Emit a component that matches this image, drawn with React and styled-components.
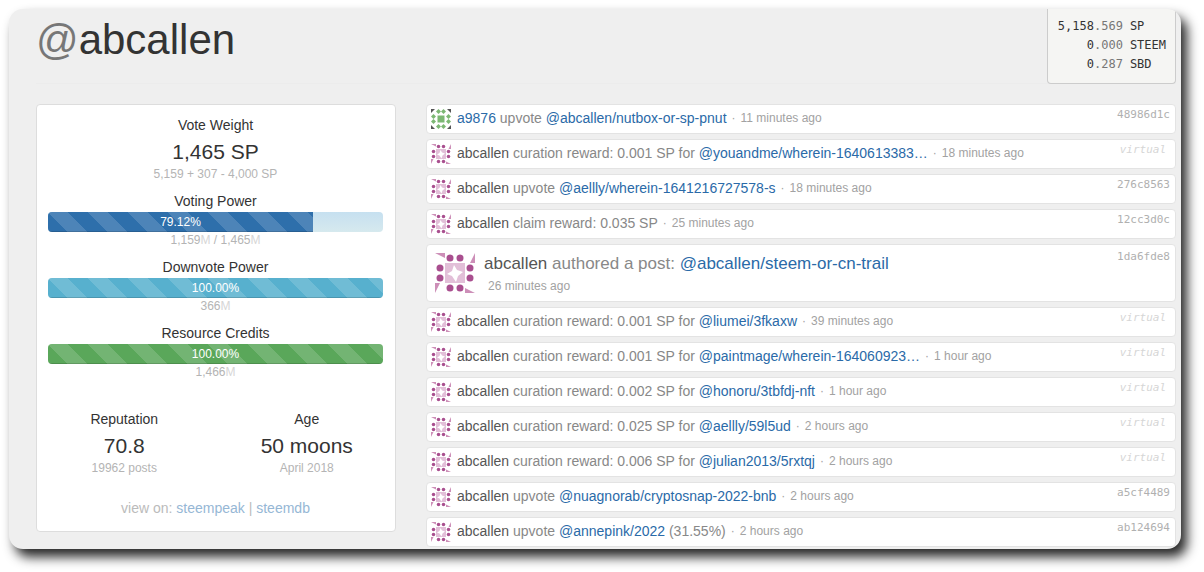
import React from 'react';
import styled, { createGlobalStyle } from 'styled-components';

const METERS = [
  { id: 'voting', label: 'Voting Power', percent: 79.12, color: '#2e6fab', amounts: ['1,159', '1,465'] },
  { id: 'downvote', label: 'Downvote Power', percent: 100, color: '#57b0ce', amounts: ['366'] },
  { id: 'credits', label: 'Resource Credits', percent: 100, color: '#5aa75a', amounts: ['1,466'] },
];

const BALANCES = [
  { unit: 'SP', whole: '5,158', fraction: '.569' },
  { unit: 'STEEM', whole: '0', fraction: '.000' },
  { unit: 'SBD', whole: '0', fraction: '.287' },
];

const ACTIVITY = [
  { user: 'a9876', action: 'upvote', target: '@abcallen/nutbox-or-sp-pnut', time: '11 minutes ago', trx: '48986d1c', other: true },
  { action: 'curation reward: 0.001 SP for', target: '@youandme/wherein-1640613383…', time: '18 minutes ago' },
  { action: 'upvote', target: '@aellly/wherein-1641216727578-s', time: '18 minutes ago', trx: '276c8563' },
  { action: 'claim reward: 0.035 SP', time: '25 minutes ago', trx: '12cc3d0c' },
  { action: 'authored a post:', target: '@abcallen/steem-or-cn-trail', time: '26 minutes ago', trx: '1da6fde8', large: true },
  { action: 'curation reward: 0.001 SP for', target: '@liumei/3fkaxw', time: '39 minutes ago' },
  { action: 'curation reward: 0.001 SP for', target: '@paintmage/wherein-164060923…', time: '1 hour ago' },
  { action: 'curation reward: 0.002 SP for', target: '@honoru/3tbfdj-nft', time: '1 hour ago' },
  { action: 'curation reward: 0.025 SP for', target: '@aellly/59l5ud', time: '2 hours ago' },
  { action: 'curation reward: 0.006 SP for', target: '@julian2013/5rxtqj', time: '2 hours ago' },
  { action: 'upvote', target: '@nuagnorab/cryptosnap-2022-bnb', time: '2 hours ago', trx: 'a5cf4489' },
  { action: 'upvote', target: '@annepink/2022', note: '(31.55%)', time: '2 hours ago', trx: 'ab124694' },
];

const PinkAvatar = () => (
  <>
    <path d='M0 0h10v5zM40 0v10h-5zM40 40H30v-5zM0 40V30h5z' fill='#cd8fb8' />
    <path d='M10 10h20v20H10z' fill='#e2bfd8' />
    <path d='M19 12l3 5 6 2-5 4-2 6-4-6-5-2 5-3z' fill='#fff' />
    {[15, 25].map(n => (
      <g key={n} fill='#a94f8f'>
        <circle cx={n} cy='5' r='3.5' />
        <circle cx={n} cy='35' r='3.5' />
        <circle cx='5' cy={n} r='3.5' />
        <circle cx='35' cy={n} r='3.5' />
      </g>
    ))}
  </>
);

const GreenAvatar = () => (
  <>
    <path d='M0 0h8l-8 8zM40 0v8l-8-8zM40 40h-8l8-8zM0 40v-8l8 8z' fill='#555' />
    <path d='M13 13h14v14H13z' fill='#7db874' />
    {[15, 25].map(n => (
      <g key={n} fill='#7db874'>
        <path d={`M${n} 0l5 5-5 5-5-5z`} />
        <path d={`M${n} 30l5 5-5 5-5-5z`} />
        <path d={`M5 ${n - 5}l5 5-5 5-5-5z`} />
        <path d={`M35 ${n - 5}l5 5-5 5-5-5z`} />
      </g>
    ))}
  </>
);

const Meter = ({ meter }) => (
  <>
    <Label>{meter.label}</Label>
    <Track role='progressbar' aria-label={meter.label} aria-valuenow={meter.percent}>
      <Fill $color={meter.color} style={{ width: `${meter.percent}%` }}>
        {meter.percent.toFixed(2)}%
      </Fill>
    </Track>
    <MeterNote>
      {meter.amounts.map((amount, i) => (
        <React.Fragment key={amount}>
          {i > 0 && ' / '}
          {amount}
          <Unit>M</Unit>
        </React.Fragment>
      ))}
    </MeterNote>
  </>
);

const Activity = ({ item }) => (
  <Row $large={item.large}>
    <Avatar viewBox='0 0 40 40' $large={item.large} aria-hidden='true'>
      {item.other ? <GreenAvatar /> : <PinkAvatar />}
    </Avatar>
    <Summary $large={item.large}>
      <span>
        <UserLink href='#user' $other={item.other}>{item.user || 'abcallen'}</UserLink> {item.action}
        {item.target && <> <PostLink href='#post'>{item.target}</PostLink></>}
        {item.note && ` ${item.note}`}
      </span>
      <Time $large={item.large}>
        {!item.large && <Dot>·</Dot>}
        {item.time}
      </Time>
    </Summary>
    {item.trx ? <TrxLink href='#trx' $large={item.large}>{item.trx}</TrxLink> : <Virtual>virtual</Virtual>}
  </Row>
);

const App = () => (
  <>
    <PageStyle />
    <Frame>
      <Header>
        <Title><At>@</At>abcallen</Title>
        <Balances>
          <tbody>
            {BALANCES.map(({ unit, whole, fraction }) => (
              <tr key={unit}>
                <Amount>{whole}<Fraction>{fraction}</Fraction></Amount>
                <td>{unit}</td>
              </tr>
            ))}
          </tbody>
        </Balances>
      </Header>
      <Columns>
        <Card>
          <Label>Vote Weight</Label>
          <Value>1,465 SP</Value>
          <Note>5,159 + 307 - 4,000 SP</Note>
          {METERS.map(meter => (
            <Meter key={meter.id} meter={meter} />
          ))}
          <Stats>
            <div>
              <Label>Reputation</Label>
              <Value>70.8</Value>
              <Note>19962 posts</Note>
            </div>
            <div>
              <Label>Age</Label>
              <Value>50 moons</Value>
              <Note>April 2018</Note>
            </div>
          </Stats>
          <ViewOn>
            view on: <a href='#steempeak'>steempeak</a> | <a href='#steemdb'>steemdb</a>
          </ViewOn>
        </Card>
        <Feed>
          {ACTIVITY.map((item, i) => (
            <Activity key={i} item={item} />
          ))}
        </Feed>
      </Columns>
    </Frame>
  </>
);

export default App;

const PageStyle = createGlobalStyle`
  * {
    box-sizing: border-box;
  }

  body {
    margin: 0;
    background: #fff;
    color: #333;
    font: 14px/20px 'Liberation Sans', Arial, sans-serif;
  }

  a {
    text-decoration: none;
  }
`;

const Frame = styled.main`
  height: calc(100vh - 32px);
  margin: 9px 23px 23px 9px;
  padding: 0 5px 0 27px;
  overflow: hidden;
  background: #efefef;
  border-radius: 14px;
  box-shadow: 6px 8px 12px rgba(0, 0, 0, 0.85);
`;

const Header = styled.header`
  display: flex;
  align-items: flex-start;
  justify-content: space-between;
  height: 75px;
  margin-bottom: 20px;
  border-bottom: 1px solid #ececec;
`;

const Title = styled.h1`
  margin: 8px 0 0;
  font-size: 42px;
  font-weight: 400;
  line-height: 46px;
`;

const At = styled.span`
  color: #777;
`;

const Balances = styled.table`
  border: 1px solid #ccc;
  border-top: 0;
  border-radius: 0 0 4px 4px;
  background: #f5f5f3;
  border-spacing: 0;
  padding: 8px 9px 9px 10px;
  font: 12px/19px 'DejaVu Sans Mono', monospace;

  td {
    padding: 0;
  }
`;

const Amount = styled.td`
  && {
    padding-right: 7px;
  }
  text-align: right;
`;

const Fraction = styled.span`
  color: #777;
`;

const Columns = styled.div`
  display: grid;
  grid-template-columns: 360fr 750fr;
  gap: 30px;
  align-items: start;
`;

const Card = styled.section`
  padding: 10px 12px 13px 11px;
  border: 1px solid #ddd;
  border-radius: 4px;
  background: #fff;
  text-align: center;
`;

const Label = styled.div`
  line-height: 20px;
`;

const Value = styled.div`
  height: 32px;
  font-size: 21px;
  line-height: 34px;
`;

const Note = styled.div`
  height: 24px;
  color: #b4b4b4;
  font-size: 12px;
  line-height: 14px;
`;

const MeterNote = styled(Note)`
  height: 25px;
  line-height: 16px;
`;

const Unit = styled.span`
  color: #d6d6d6;
`;

const Track = styled.div`
  height: 20px;
  margin-top: 1px;
  overflow: hidden;
  border-radius: 4px;
  background: linear-gradient(#c6e0f0, #d6e9ee);
`;

const Fill = styled.div`
  height: 100%;
  background: linear-gradient(
      45deg,
      rgba(255, 255, 255, 0.15) 25%,
      transparent 25%,
      transparent 50%,
      rgba(255, 255, 255, 0.15) 50%,
      rgba(255, 255, 255, 0.15) 75%,
      transparent 75%
    )
    0 0 / 40px 40px ${({ $color }) => $color};
  box-shadow: inset 0 -1px 0 rgba(0, 0, 0, 0.15);
  color: #fff;
  font-size: 12px;
  line-height: 20px;
`;

const Stats = styled.div`
  display: grid;
  grid-template-columns: 1fr 1fr;
  gap: 30px;
  margin: 20px 0 13px;
`;

const ViewOn = styled.div`
  color: #bbb;

  a {
    color: #96b7d5;
  }
`;

const Feed = styled.section`
  display: grid;
  gap: 5px;
`;

const Row = styled.article`
  display: flex;
  align-items: flex-start;
  height: ${({ $large }) => ($large ? 58 : 30)}px;
  padding: ${({ $large }) => ($large ? '8px 5px 0 8px' : '4px 5px 0 4px')};
  border: 1px solid #e3e3e3;
  border-radius: 4px;
  background: #fff;
`;

const Avatar = styled.svg`
  flex: none;
  width: ${({ $large }) => ($large ? 40 : 20)}px;
  height: ${({ $large }) => ($large ? 40 : 20)}px;
  margin-right: ${({ $large }) => ($large ? 9 : 6)}px;
`;

const Summary = styled.div`
  display: flex;
  flex: 1;
  flex-direction: ${({ $large }) => ($large ? 'column' : 'row')};
  color: #888;
  font-size: ${({ $large }) => ($large ? 17 : 14)}px;
  line-height: ${({ $large }) => ($large ? 22 : 18)}px;
  white-space: nowrap;
`;

const UserLink = styled.a`
  color: ${({ $other }) => ($other ? '#2a6aa8' : '#555')};
`;

const PostLink = styled.a`
  color: #2a6aa8;
`;

const Time = styled.span`
  margin-left: ${({ $large }) => ($large ? 4 : 5)}px;
  color: #a2a2a2;
  font-size: 12px;
`;

const Dot = styled.span`
  margin-right: 5px;
`;

const TrxLink = styled.a`
  margin-top: ${({ $large }) => ($large ? -5 : -3)}px;
  color: #b0b0b0;
  font: 11px/18px 'DejaVu Sans Mono', monospace;
`;

const Virtual = styled(TrxLink).attrs({ as: 'span' })`
  margin-right: 4px;
  color: #d6d6d6;
  font-style: italic;
`;
